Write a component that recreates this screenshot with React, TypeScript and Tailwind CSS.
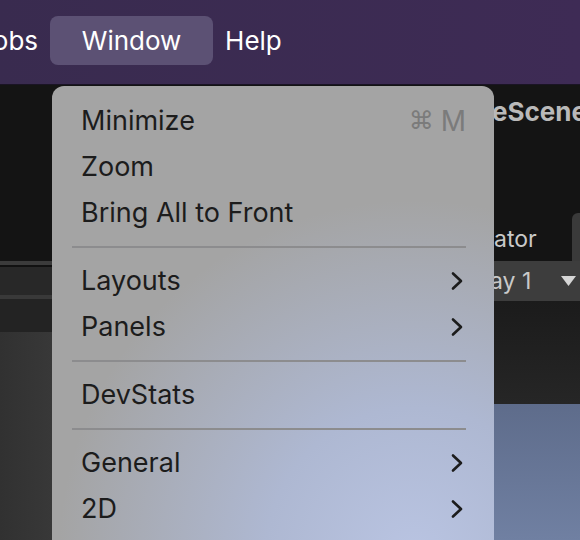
type Item = { label: string; shortcut?: string; sub?: boolean } | "sep";

const items: Item[] = [
  { label: "Minimize", shortcut: "M" },
  { label: "Zoom" },
  { label: "Bring All to Front" },
  "sep",
  { label: "Layouts", sub: true },
  { label: "Panels", sub: true },
  "sep",
  { label: "DevStats" },
  "sep",
  { label: "General", sub: true },
  { label: "2D", sub: true },
  { label: "Animation", sub: true },
];

const font = { fontFamily: "Inter, 'Noto Sans', sans-serif" };

const Chevron = () => (
  <svg width="14" height="20" viewBox="0 0 14 20" fill="none" className="mr-[2px]">
    <path d="M3 2.5 L11 10 L3 17.5" stroke="#1c1c1c" strokeWidth="2.6" strokeLinecap="round" strokeLinejoin="round" />
  </svg>
);

const MenuBar = () => (
  <div className="h-[85px] flex items-start pt-[16px] bg-gradient-to-r from-[#392b4f] to-[#3e2b55] border-b border-[#1a1424] text-white text-[26px]">
    <span className="ml-[-22px] leading-[49px]">Jobs</span>
    <span className="ml-[12px] h-[49px] w-[163px] rounded-[8px] bg-[#5c5174] flex items-center justify-center">
      Window
    </span>
    <span className="ml-[12px] leading-[49px]">Help</span>
  </div>
);

const Editor = () => (
  <div className="flex h-[455px] bg-[#141414]">
    <div className="w-[52px] flex flex-col">
      <div className="h-[176px] bg-[#141414]" />
      <div className="h-[4px] bg-[#3b3b3b]" />
      <div className="h-[2px] bg-[#111]" />
      <div className="h-[28px] bg-[#282828]" />
      <div className="h-[4px] bg-[#393939]" />
      <div className="h-[33px] bg-[#232323]" />
      <div className="flex-1 bg-gradient-to-r from-[#313131] to-[#383838]" />
    </div>
    <div className="flex-1" />
    <div className="w-[86px] flex flex-col overflow-hidden text-[#c9c9c9]">
      <div className="h-[128px] pt-[7px]">
        <span className="ml-[-2px] text-[26px] font-bold text-[#b9b9b9] whitespace-nowrap">eScene</span>
      </div>
      <div className="h-[48px] flex">
        <span className="w-[78px] text-[23px] pt-[9px] whitespace-nowrap">ator</span>
        <div className="flex-1 bg-[#3a3a3a] rounded-tl-[6px]" />
      </div>
      <div className="h-[40px] bg-[#3d3d3d] flex items-center justify-between pr-[4px]">
        <span className="text-[23px] ml-[-4px] whitespace-nowrap">ay 1</span>
        <svg width="15" height="10" viewBox="0 0 15 10">
          <path d="M0 0 H15 L7.5 10 Z" fill="#d6d6d6" />
        </svg>
      </div>
      <div className="h-[103px] bg-gradient-to-b from-[#1b1b1b] to-[#262626]" />
      <div className="flex-1 bg-gradient-to-b from-[#5e6c8b] to-[#7080a2]" />
    </div>
  </div>
);

const Menu = () => (
  <div
    className="absolute left-[52px] top-[86px] w-[442px] h-[470px] rounded-t-[12px] pt-[12px] pl-[20px] pr-[28px] bg-[#a4a4a4] text-[#1c1c1c] text-[27px] overflow-hidden"
    style={font}
  >
    <div className="absolute inset-0 bg-[radial-gradient(circle_at_82%_100%,#b9c4e2_0%,#aeb8d2_25%,transparent_60%)]" />
    <div className="relative flex flex-col">
      {items.map((it, i) =>
        it === "sep" ? (
          <div key={i} className="h-[22px] flex items-center">
            <div className="h-[2px] w-full bg-[#8c8c8e]" />
          </div>
        ) : (
          <div key={i} className="h-[46px] flex items-center justify-between pl-[9px]">
            <span>{it.label}</span>
            {it.shortcut && (
              <span className="flex items-center gap-[7px] text-[#7b7b7b]">
                <span className="text-[25px]">⌘</span>
                <span className="text-[28px]">{it.shortcut}</span>
              </span>
            )}
            {it.sub && <Chevron />}
          </div>
        )
      )}
    </div>
  </div>
);

export default function App() {
  return (
    <div className="relative w-[580px] h-[540px] overflow-hidden bg-[#141414]" style={font}>
      <MenuBar />
      <Editor />
      <Menu />
    </div>
  );
}
